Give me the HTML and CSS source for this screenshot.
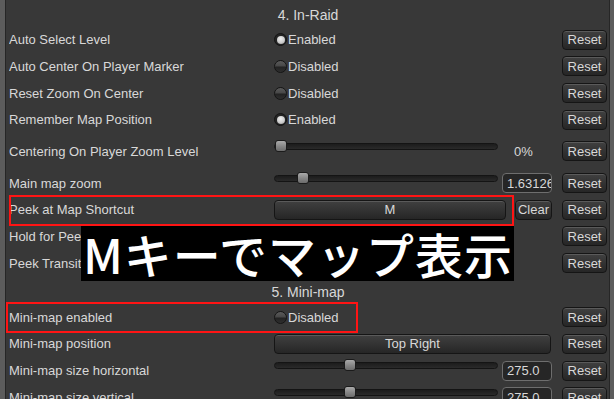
FILE: index.html
```html
<!DOCTYPE html>
<html lang="ja">
<head>
<meta charset="utf-8">
<title>Map settings</title>
<link rel="stylesheet" href="styles.css">
</head>
<body>
<div class="panel">
  <div class="section first">4. In-Raid</div>

  <div class="row">
    <div class="label">Auto Select Level</div>
    <div class="ctrl"><span class="radio on"></span><span class="rtext">Enabled</span></div>
    <div class="btn reset">Reset</div>
  </div>
  <div class="row">
    <div class="label">Auto Center On Player Marker</div>
    <div class="ctrl"><span class="radio"></span><span class="rtext">Disabled</span></div>
    <div class="btn reset">Reset</div>
  </div>
  <div class="row">
    <div class="label">Reset Zoom On Center</div>
    <div class="ctrl"><span class="radio"></span><span class="rtext">Disabled</span></div>
    <div class="btn reset">Reset</div>
  </div>
  <div class="row">
    <div class="label">Remember Map Position</div>
    <div class="ctrl"><span class="radio on"></span><span class="rtext">Enabled</span></div>
    <div class="btn reset">Reset</div>
  </div>
  <div class="row tall">
    <div class="label">Centering On Player Zoom Level</div>
    <div class="ctrl">
      <div class="slider"><span class="thumb" style="left:0px"></span></div>
      <div class="value">0%</div>
    </div>
    <div class="btn reset">Reset</div>
  </div>
  <div class="row tall">
    <div class="label">Main map zoom</div>
    <div class="ctrl">
      <div class="slider"><span class="thumb" style="left:22px"></span></div>
      <div class="field">1.63126</div>
    </div>
    <div class="btn reset">Reset</div>
  </div>
  <div class="row">
    <div class="label">Peek at Map Shortcut</div>
    <div class="ctrl">
      <div class="btn key">M</div>
      <div class="btn clear">Clear</div>
    </div>
    <div class="btn reset">Reset</div>
  </div>
  <div class="row">
    <div class="label">Hold for Peek</div>
    <div class="ctrl"><span class="radio"></span><span class="rtext">Disabled</span></div>
    <div class="btn reset">Reset</div>
  </div>
  <div class="row">
    <div class="label">Peek Transition</div>
    <div class="ctrl"><span class="radio on"></span><span class="rtext">Enabled</span></div>
    <div class="btn reset">Reset</div>
  </div>

  <div class="section second">5. Mini-map</div>

  <div class="row">
    <div class="label">Mini-map enabled</div>
    <div class="ctrl"><span class="radio"></span><span class="rtext">Disabled</span></div>
    <div class="btn reset">Reset</div>
  </div>
  <div class="row">
    <div class="label">Mini-map position</div>
    <div class="ctrl"><div class="btn wide">Top Right</div></div>
    <div class="btn reset">Reset</div>
  </div>
  <div class="row">
    <div class="label">Mini-map size horizontal</div>
    <div class="ctrl">
      <div class="slider"><span class="thumb" style="left:69px"></span></div>
      <div class="field">275.0</div>
    </div>
    <div class="btn reset">Reset</div>
  </div>
  <div class="row">
    <div class="label">Mini-map size vertical</div>
    <div class="ctrl">
      <div class="slider"><span class="thumb" style="left:69px"></span></div>
      <div class="field">275.0</div>
    </div>
    <div class="btn reset">Reset</div>
  </div>
</div>

<div class="hl hl-peek"></div>
<div class="hl hl-mini"></div>
<div class="banner">Mキーでマップ表示</div>
</body>
</html>
```

FILE: styles.css
```css
html, body {
  margin: 0;
  padding: 0;
}

body {
  width: 614px;
  height: 399px;
  overflow: hidden;
  position: relative;
  background: #5c5c5c;
  font-family: "Liberation Sans", Arial, sans-serif;
  font-size: 13px;
  color: #d8d8d8;
}

.panel {
  margin: 0 4px 0 5px;
  height: 399px;
  box-sizing: border-box;
  border-left: 1px solid #262626;
  border-right: 1px solid #262626;
  background: #383838;
  padding: 0 2px 0 3px;
  overflow: hidden;
}

.section {
  height: 26.667px;
  box-sizing: border-box;
  padding-top: 4px;
  display: flex;
  align-items: center;
  justify-content: center;
  font-size: 14px;
}

.section.first {
  height: 26.5px;
}

.section.second {
  height: 27.5px;
}

.row {
  height: 26.667px;
  box-sizing: border-box;
  padding-bottom: 3.333px;
  display: grid;
  grid-template-columns: 265px 278px 1fr;
  align-items: end;
}

.row.tall {
  height: 31.667px;
}

.label {
  height: 20px;
  display: flex;
  align-items: center;
  white-space: nowrap;
  overflow: hidden;
}

.ctrl {
  height: 20px;
  display: flex;
  align-items: center;
}

.rtext {
  margin-left: 1px;
}

.radio {
  width: 13px;
  height: 13px;
  box-sizing: border-box;
  border-radius: 50%;
  border: 1px solid #141414;
  background: linear-gradient(#5a5a5a 0%, #474747 48%, #222 52%, #2e2e2e 100%);
  position: relative;
}

.radio.on {
  background: #242424;
}

.radio.on::after {
  content: "";
  position: absolute;
  left: 1.5px;
  top: 1.5px;
  width: 8px;
  height: 8px;
  border-radius: 50%;
  background: radial-gradient(circle at 45% 35%, #efefef 0%, #cdcdcd 55%, #8e8e8e 100%);
}

.btn {
  height: 20px;
  box-sizing: border-box;
  border: 1px solid #151515;
  border-radius: 4px;
  background: linear-gradient(#404040, #262626);
  box-shadow: inset 0 1px 0 rgba(255, 255, 255, 0.14);
  display: flex;
  align-items: center;
  justify-content: center;
  color: #d8d8d8;
  white-space: nowrap;
}

.reset {
  width: 45px;
  justify-self: end;
}

.key {
  width: 232px;
}

.clear {
  width: 37px;
  margin-left: 9px;
}

.wide {
  width: 277px;
}

.slider {
  width: 224px;
  height: 7px;
  box-sizing: border-box;
  border-radius: 4px;
  border: 1px solid #141414;
  background: linear-gradient(#1c1c1c, #2a2a2a);
  position: relative;
  margin-bottom: 10px;
  flex: none;
}

.thumb {
  position: absolute;
  top: -4px;
  width: 12px;
  height: 12px;
  box-sizing: border-box;
  border: 1px solid #1b1b1b;
  border-radius: 3px;
  background: linear-gradient(#a9a9a9, #858585 55%, #6c6c6c);
}

.value {
  width: 50px;
  margin-left: 4px;
  padding-left: 12px;
  box-sizing: border-box;
}

.field {
  width: 50px;
  height: 20px;
  margin-left: 4px;
  box-sizing: border-box;
  border: 1px solid #6e6e6e;
  border-radius: 4px;
  background: #262626;
  padding-left: 4px;
  display: flex;
  align-items: center;
  overflow: hidden;
  white-space: nowrap;
}

.hl {
  position: absolute;
  box-sizing: border-box;
  border: 2px solid #ff1414;
}

.hl-peek {
  left: 9px;
  top: 195px;
  width: 505px;
  height: 31px;
}

.hl-mini {
  left: 6px;
  top: 302px;
  width: 352px;
  height: 31px;
}

.banner {
  position: absolute;
  left: 81px;
  top: 226px;
  width: 433px;
  height: 55px;
  box-sizing: border-box;
  background: #000;
  color: #fff;
  font-family: "Noto Sans CJK JP", "Noto Sans", sans-serif;
  font-size: 48px;
  font-weight: 500;
  letter-spacing: 1px;
  line-height: 55px;
  padding-left: 2px;
  white-space: nowrap;
  overflow: hidden;
}
```
